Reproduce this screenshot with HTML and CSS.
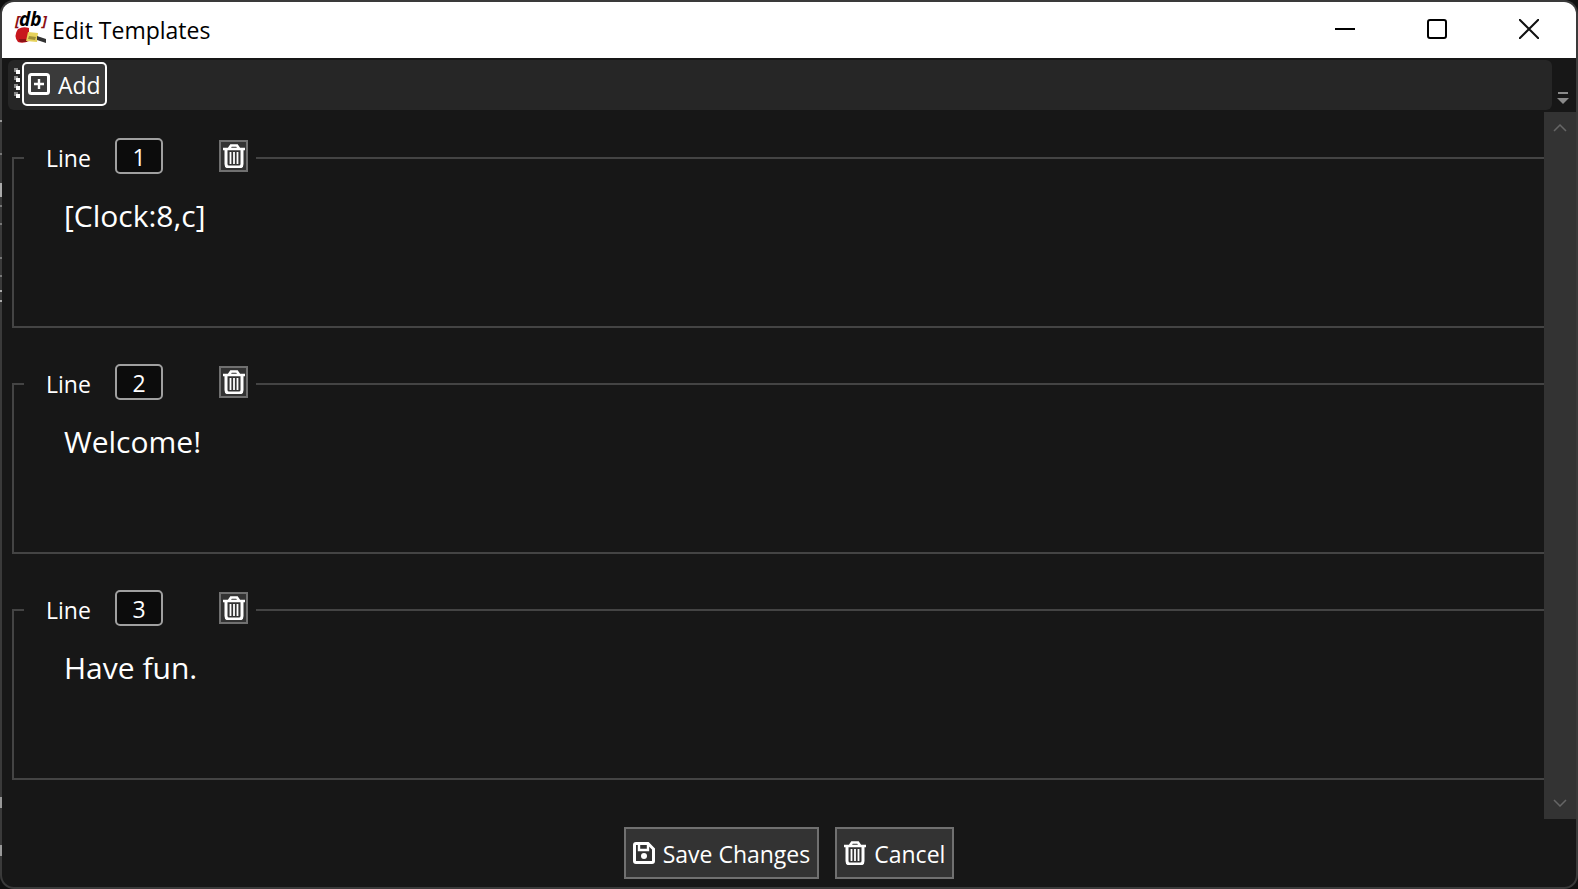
FILE: index.html
```html
<!DOCTYPE html>
<html lang="en">
<head>
	<meta charset="UTF-8">
	<title>Edit Templates</title>
	<link rel="stylesheet" href="styles.css">
</head>
<body>
	<!-- shared icons -->
	<svg class="defs" width="0" height="0">
		<symbol id="trash" viewBox="0 0 22 24">
			<path d="M0 5h22M6 4.500L8 1.500h6l2 3" fill="none" stroke="#fff" stroke-width="2.600"/>
			<path d="M3 5v15q0 3 3 3h10q3 0 3-3V5" fill="none" stroke="#fff" stroke-width="3"/>
			<path d="M7.500 8v12M11 8v12M14.500 8v12" fill="none" stroke="#fff" stroke-width="1.800"/>
		</symbol>
	</svg>
	<div class="frame">
		<div class="window">
			<header class="titlebar">
				<svg class="logo" width="32" height="32" viewBox="0 0 32 32">
					<text x="0" y="13" class="logo-bracket">[</text>
					<text x="4" y="13" class="logo-db">db</text>
					<text x="27" y="13" class="logo-bracket">]</text>
					<path d="M3 16q5-3 11-1v13q-6 3-11 1-5-6 0-13z" fill="#c8161d"/>
					<path d="M4 26h8v3H5z" fill="#8d1015"/>
					<path d="M13 19l10 1-1 9-11-1z" fill="#e6d25b"/>
					<path d="M14 23l7 1-1 3-7-1z" fill="#a08f37"/>
					<path d="M22 23l9 3v4l-9-3z" fill="#333"/>
				</svg>
				<h1>Edit Templates</h1>
				<button class="caption" aria-label="Minimize">
					<svg width="20" height="20"><path d="M0 10h20" stroke="#000" stroke-width="2"/></svg>
				</button>
				<button class="caption" aria-label="Maximize">
					<svg width="20" height="20"><rect x="1" y="1" width="18" height="18" rx="2" fill="none" stroke="#000" stroke-width="2"/></svg>
				</button>
				<button class="caption" aria-label="Close">
					<svg width="20" height="20"><path d="M0 0l20 20M20 0L0 20" stroke="#111" stroke-width="2"/></svg>
				</button>
			</header>

			<div class="toolbar-row">
				<div class="toolbar">
					<svg class="grip" width="8" height="32">
						<path d="M0 2h4M0 10h4M0 18h4M0 26h4" stroke="#888" stroke-width="4"/>
						<path d="M2 4h4M2 12h4M2 20h4M2 28h4" stroke="#fff" stroke-width="4"/>
					</svg>
					<button class="add">
						<svg width="22" height="22"><rect x="1.500" y="1.500" width="19" height="19" rx="2" fill="none" stroke="#fff" stroke-width="3"/><path d="M11 6v10M6 11h10" stroke="#fff" stroke-width="2.400"/></svg>
						<span>Add</span>
					</button>
				</div>
				<button class="overflow" aria-label="More tools">
					<svg width="12" height="12"><path d="M1 1h10" stroke="#8a8a8a" stroke-width="2"/><path d="M0 6h12l-6 6z" fill="#8a8a8a"/></svg>
				</button>
			</div>

			<main class="content">
				<form class="lines" id="templates">
					<fieldset>
						<legend>
							<label for="line1">Line</label>
							<input type="text" id="line1" value="1">
							<button type="button" class="delete" aria-label="Delete line 1"><svg width="22" height="24"><use href="#trash"/></svg></button>
						</legend>
						<textarea aria-label="Text of line 1">[Clock:8,c]</textarea>
					</fieldset>
					<fieldset>
						<legend>
							<label for="line2">Line</label>
							<input type="text" id="line2" value="2">
							<button type="button" class="delete" aria-label="Delete line 2"><svg width="22" height="24"><use href="#trash"/></svg></button>
						</legend>
						<textarea aria-label="Text of line 2">Welcome!</textarea>
					</fieldset>
					<fieldset>
						<legend>
							<label for="line3">Line</label>
							<input type="text" id="line3" value="3">
							<button type="button" class="delete" aria-label="Delete line 3"><svg width="22" height="24"><use href="#trash"/></svg></button>
						</legend>
						<textarea aria-label="Text of line 3">Have fun.</textarea>
					</fieldset>
				</form>
				<div class="scrollbar">
					<button aria-label="Scroll up"><svg width="14" height="8"><path d="M1 7l6-6 6 6" fill="none" stroke="#666" stroke-width="1.500"/></svg></button>
					<button aria-label="Scroll down"><svg width="14" height="8"><path d="M1 1l6 6 6-6" fill="none" stroke="#666" stroke-width="1.500"/></svg></button>
				</div>
			</main>

			<footer class="actions">
				<button form="templates">
					<svg width="22" height="22"><path d="M3 1.500h12l5.500 5.500v12q0 1.500-1.500 1.500H3q-1.500 0-1.500-1.500V3q0-1.500 1.500-1.500z" fill="none" stroke="#fff" stroke-width="3"/><path d="M6 2v6h9V2" fill="none" stroke="#fff" stroke-width="2.400"/><circle cx="11" cy="14" r="3" fill="#fff"/></svg>
					<span>Save Changes</span>
				</button>
				<button type="button">
					<svg width="22" height="24"><use href="#trash"/></svg>
					<span>Cancel</span>
				</button>
			</footer>
		</div>
	</div>
</body>
</html>
```
FILE: styles.css
```css
*{margin:0;padding:0;box-sizing:border-box}
body{
	background:#101010;
	color:#fff;
	font:23px/32px "Open Sans", "Noto Sans", sans-serif;
}
button,input,textarea{
	font:inherit;
	color:inherit;
	border:none;
	background:none;
}
svg{
	display:block;
	flex:none;
}
.defs{
	position:absolute;
}
/* thin frame round the window, with the desktop showing at its left edge */
.frame{
	min-height:100vh;
	padding:2px;
	display:flex;
	border-radius:14px;
	background:
		linear-gradient(#999, #999) 0 120px / 2px 2px no-repeat,
		linear-gradient(#777, #777) 0 153px / 2px 2px no-repeat,
		linear-gradient(#aaa, #aaa) 0 183px / 2px 14px no-repeat,
		linear-gradient(#777, #777) 0 205px / 2px 2px no-repeat,
		linear-gradient(#777, #777) 0 223px / 2px 2px no-repeat,
		linear-gradient(#777, #777) 0 257px / 2px 2px no-repeat,
		linear-gradient(#777, #777) 0 275px / 2px 2px no-repeat,
		linear-gradient(#aaa, #aaa) 0 290px / 2px 2px no-repeat,
		linear-gradient(#aaa, #aaa) 0 300px / 2px 2px no-repeat,
		linear-gradient(#999, #999) 0 797px / 2px 11px no-repeat,
		linear-gradient(#999, #999) 0 845px / 2px 11px no-repeat,
		#3a3a3a;
}
.window{
	flex:1;
	min-width:0;
	display:flex;
	flex-direction:column;
	border-radius:12px;
	overflow:hidden;
	background:#171717;
}
.titlebar{
	height:56px;
	padding:0 1px 2px 13px;
	display:flex;
	align-items:center;
	background:#fff;
	color:#000;
}
.titlebar h1{
	flex:1;
	padding:2px 0 0 5px;
	font-size:23px;
	font-weight:normal;
}
.logo{
	overflow:visible;
}
.logo-db{
	font:italic bold 19px/24px "Open Sans", sans-serif;
}
.logo-bracket{
	font:italic bold 15px/20px "Open Sans", sans-serif;
	fill:#8d1015;
}
.caption{
	width:92px;
	height:54px;
	display:flex;
	align-items:center;
	justify-content:center;
}
.toolbar-row{
	display:flex;
	padding:2px 0 2px 6px;
}
.toolbar{
	flex:1;
	height:50px;
	padding:2px 6px;
	display:flex;
	border-radius:6px;
	background:#262626;
}
.grip{
	margin-top:6px;
}
.add{
	height:44px;
	padding:0 4px;
	display:flex;
	align-items:center;
	gap:8px;
	border:2px solid #fff;
	border-radius:5px;
	background:#3a3a3a;
}
.add span,
.actions span{
	padding-top:2px;
}
.overflow{
	width:24px;
	padding:0 0 6px 5px;
	display:flex;
	align-items:flex-end;
}
.content{
	flex:1;
	display:flex;
}
.lines{
	flex:1;
	min-width:0;
	padding:26px 0 0 10px;
}
fieldset{
	height:190px;
	margin-bottom:36px;
	padding-left:10px;
	border:2px solid #444;
	border-right:none;
}
legend{
	height:40px;
	padding:0 8px 4px 22px;
	display:flex;
	align-items:center;
}
legend label{
	width:69px;
	padding-top:3px;
}
legend input{
	width:48px;
	height:36px;
	padding-top:2px;
	text-align:center;
	border:2px solid #a0a0a0;
	border-radius:5px;
	background:#0c0c0c;
}
.delete{
	width:29px;
	height:32px;
	margin-left:56px;
	display:flex;
	align-items:center;
	justify-content:center;
	border:2px solid #707070;
	background:#333;
}
textarea{
	display:block;
	width:100%;
	height:128px;
	padding:16px 40px;
	resize:none;
	font-size:30px;
	line-height:44px;
}
.scrollbar{
	width:32px;
	padding:12px 0;
	display:flex;
	flex-direction:column;
	justify-content:space-between;
	align-items:center;
	background:#333;
}
.actions{
	padding:8px;
	display:flex;
	justify-content:center;
	gap:16px;
}
.actions button{
	height:52px;
	padding:0 7px;
	display:flex;
	align-items:center;
	gap:8px;
	border:2px solid #707070;
	background:#333;
}
```
